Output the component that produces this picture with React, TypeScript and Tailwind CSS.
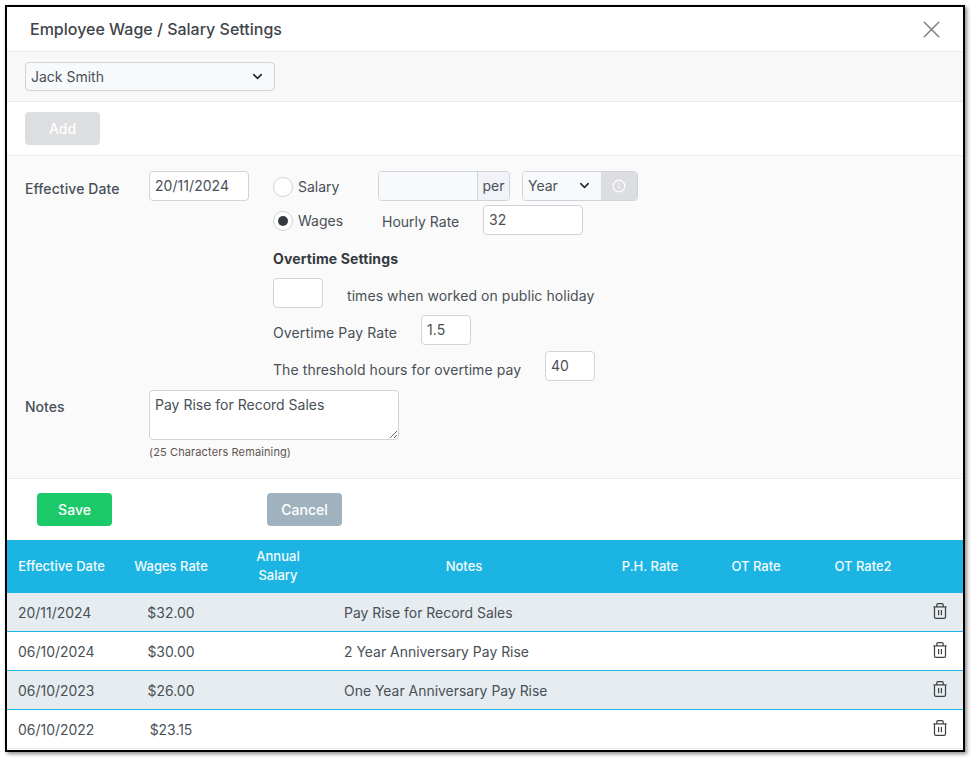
import { ChevronDown, Info, X } from "lucide-react";

const inputCls =
  "h-[30px] rounded border border-[#ced4da] bg-white px-[5px] pb-[1px] text-[14px] tracking-[0.05px] text-[#495057] outline-none";

const rows = [
  { date: "20/11/2024", rate: "$32.00", notes: "Pay Rise for Record Sales" },
  { date: "06/10/2024", rate: "$30.00", notes: "2 Year Anniversary Pay Rise" },
  { date: "06/10/2023", rate: "$26.00", notes: "One Year Anniversary Pay Rise" },
  { date: "06/10/2022", rate: "$23.15", notes: "" },
];

function TrashIcon() {
  return (
    <svg width="14" height="16" viewBox="0 0 14 16" fill="none" stroke="#3c4043" strokeWidth="1.2" className="mx-auto -mt-[2px] block">
      <path d="M0.4 3.9h13.2" />
      <path d="M3.8 3.9V1.9C3.8 1.2 4.3 0.7 5 0.7h4c.7 0 1.2.5 1.2 1.2v2" />
      <path d="M1.5 3.9v10c0 .8.6 1.4 1.4 1.4h8.2c.8 0 1.4-.6 1.4-1.4v-10" />
      <path d="M5.6 7v5.2M8.4 7v5.2" />
    </svg>
  );
}

function Radio({ checked, label }: { checked?: boolean; label: string }) {
  return (
    <label className="flex w-[105px] shrink-0 items-center gap-[5px]">
      <span className="mt-[2px] flex size-[20px] items-center justify-center rounded-full border border-[#ced4da] bg-white">
        {checked && <span className="size-[10px] rounded-full bg-[#343a40]" />}
      </span>
      <span className={`text-[14px] text-[#495057] ${checked ? "mt-[2px]" : ""}`}>{label}</span>
    </label>
  );
}

export default function App() {
  return (
    <div className="h-[761px] bg-white pl-[5px] pt-[5px] font-['Inter',sans-serif] text-[14px] text-[#343a40]">
      <div className="h-[747px] w-[960px] overflow-hidden border-2 border-black bg-white shadow-[2px_2px_4px_rgba(0,0,0,0.45)]">
        <div className="flex h-[45px] items-center justify-between border-b border-[#e9ecef] pl-[23px] pr-[17px]">
          <h1 className="text-[16px] font-medium leading-none text-[#3f4448]">Employee Wage / Salary Settings</h1>
          <X size={29} strokeWidth={1.2} className="text-[#808080]" />
        </div>

        <div className="flex h-[50px] items-center border-b border-[#e9ecef] bg-[#f8f8f8] pl-[18px]">
          <div className="flex h-[29px] w-[250px] items-center justify-between rounded border border-[#ced4da] bg-[#f8f9fa] pl-[5px] pr-[9px] text-[#495057]">
            Jack Smith
            <ChevronDown size={15} strokeWidth={2.4} className="text-[#212529]" />
          </div>
        </div>

        <div className="flex h-[54px] items-center border-b border-[#e9ecef] pl-[18px]">
          <button className="h-[33px] w-[75px] rounded bg-[#dcdee0] font-medium text-white">Add</button>
        </div>

        <div className="h-[323px] border-b border-[#e9ecef] bg-[#fafafa] pl-[18px] pt-[15px]">
          <div className="flex">
            <span className="mt-[7px] w-[124px] shrink-0 font-medium tracking-[0.08px] text-[#495057]">Effective Date</span>
            <div className="flex h-[30px] w-[100px] items-center">
              <input readOnly value="20/11/2024" className={`${inputCls} w-full`} />
            </div>
            <div className="ml-[24px] flex flex-col">
              <div className="flex h-[30px] items-center">
                <Radio label="Salary" />
                <div className="flex h-[30px] w-[132px] overflow-hidden rounded border border-[#ced4da]">
                  <div className="w-[98px] bg-[#f8f9fa]" />
                  <div className="flex flex-1 items-center justify-center border-l border-[#ced4da] bg-[#f1f3f8] pb-[1px] text-[#495057]">per</div>
                </div>
                <div className="ml-[12px] flex h-[30px] w-[116px] overflow-hidden rounded border border-[#ced4da]">
                  <div className="flex w-[78px] items-center justify-between bg-[#f8f9fa] pb-[1px] pl-[5px] pr-[9px] text-[#495057]">
                    Year
                    <ChevronDown size={15} strokeWidth={2.4} className="text-[#212529]" />
                  </div>
                  <div className="flex flex-1 items-center justify-center bg-[#dcdde0]">
                    <Info size={14} className="text-white" />
                  </div>
                </div>
              </div>

              <div className="mt-[4px] flex h-[29px] items-center">
                <Radio checked label="Wages" />
                <span className="ml-[4px] mt-[4px] w-[101px] text-[#495057]">Hourly Rate</span>
                <input readOnly value="32" className={`${inputCls} h-[29px] w-[100px]`} />
              </div>

              <div className="mt-[16px] font-bold leading-[18px] tracking-[0.12px] text-[#343a40]">Overtime Settings</div>

              <div className="mt-[10px] flex h-[30px] items-center">
                <input readOnly className={`${inputCls} w-[50px]`} />
                <span className="ml-[24px] mt-[5px] tracking-[0.06px] text-[#495057]">times when worked on public holiday</span>
              </div>

              <div className="mt-[7px] flex h-[30px] items-center">
                <span className="mt-[5px] w-[148px] tracking-[0.12px] text-[#495057]">Overtime Pay Rate</span>
                <input readOnly value="1.5" className={`${inputCls} w-[50px]`} />
              </div>

              <div className="mt-[6px] flex h-[29px] items-center">
                <span className="mt-[8px] w-[272px] tracking-[0.08px] text-[#495057]">The threshold hours for overtime pay</span>
                <input readOnly value="40" className={`${inputCls} h-[29px] w-[50px]`} />
              </div>
            </div>
          </div>

          <div className="mt-[10px] flex">
            <span className="mt-[6px] w-[124px] shrink-0 font-medium text-[#495057]">Notes</span>
            <div>
              <textarea
                readOnly
                value="Pay Rise for Record Sales"
                className="block h-[50px] w-[250px] rounded border border-[#ced4da] bg-white px-[5px] py-[3px] text-[14px] leading-[21px] text-[#495057] outline-none"
              />
              <div className="mt-[5px] text-[11px] leading-[14px] tracking-[0.12px] text-[#5f5550]">(25 Characters Remaining)</div>
            </div>
          </div>
        </div>

        <div className="flex h-[61px] items-center pb-[1px] pl-[30px]">
          <button className="h-[33px] w-[75px] rounded bg-[#1bc969] font-medium text-white">Save</button>
          <button className="ml-[155px] h-[33px] w-[75px] rounded bg-[#9fb2be] font-medium text-white">Cancel</button>
        </div>

        <table className="w-full table-fixed border-separate border-spacing-0 text-[13px]">
          <colgroup>
            <col className="w-[109px]" />
            <col className="w-[110px]" />
            <col className="w-[104px]" />
            <col className="w-[268px]" />
            <col className="w-[104px]" />
            <col className="w-[108px]" />
            <col className="w-[106px]" />
            <col />
          </colgroup>
          <thead>
            <tr className="h-[53px] bg-[#1cb5e3] text-center text-[#f3fbfe]">
              <th className="font-medium">Effective Date</th>
              <th className="font-medium">Wages Rate</th>
              <th className="pb-[2px] font-medium leading-[19px]">
                Annual
                <br />
                Salary
              </th>
              <th className="font-medium">Notes</th>
              <th className="font-medium">P.H. Rate</th>
              <th className="font-medium">OT Rate</th>
              <th className="font-medium">OT Rate2</th>
              <th />
            </tr>
          </thead>
          <tbody className="text-[13.95px] text-[#495057]">
            {rows.map((r, i) => {
              const border = i === 3 ? "border-b border-[#e9ecef]" : "border-b border-[#1cb5e3]";
              return (
                <tr key={r.date} className={`h-[39px] ${i % 2 === 0 ? "bg-[#e6ecef]" : "bg-white"}`}>
                  <td className={`${border} pl-[11px] pt-[3px]`}>{r.date}</td>
                  <td className={`${border} pt-[3px] text-center`}>{r.rate}</td>
                  <td className={border} />
                  <td className={`${border} pl-[14px] pt-[3px]`}>{r.notes}</td>
                  <td className={border} />
                  <td className={border} />
                  <td className={border} />
                  <td className={border}>
                    <TrashIcon />
                  </td>
                </tr>
              );
            })}
          </tbody>
        </table>
      </div>
    </div>
  );
}
